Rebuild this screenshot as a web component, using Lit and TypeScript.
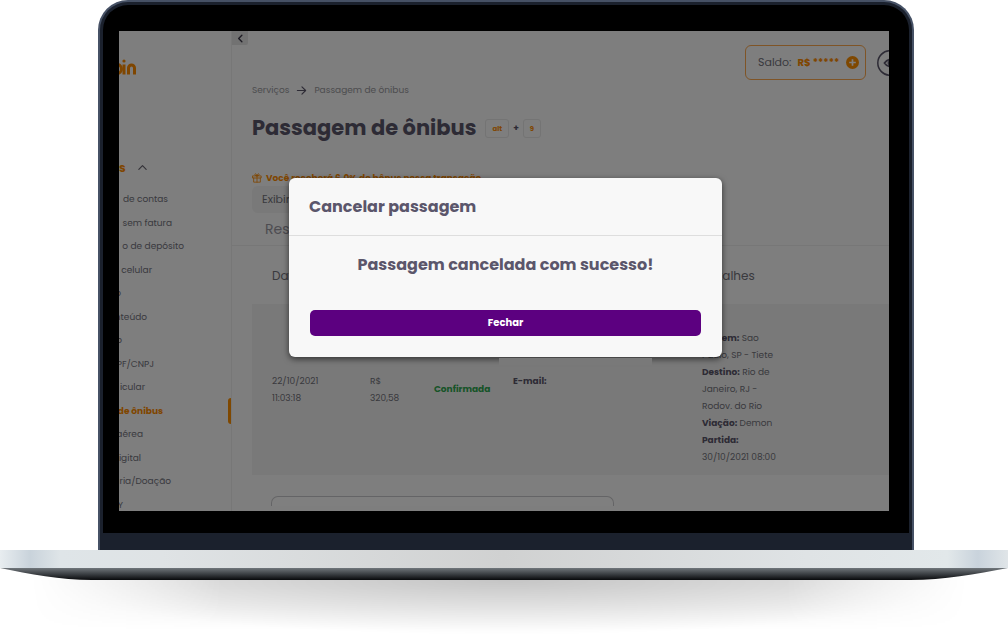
import { LitElement, html, css, svg } from "lit";
import { customElement } from "lit/decorators.js";
import { classMap } from "lit/directives/class-map.js";
import { styleMap } from "lit/directives/style-map.js";

interface NavItem {
  label: string;
  end: number;
  active?: boolean;
}

const NAV: NavItem[] = [
  { label: "de contas", end: 49 },
  { label: "sem fatura", end: 53 },
  { label: "o de depósito", end: 65 },
  { label: "celular", end: 33 },
  { label: "o", end: 2 },
  { label: "nteúdo", end: 28 },
  { label: "o", end: 3 },
  { label: "PF/CNPJ", end: 35 },
  { label: "icular", end: 26 },
  { label: "de ônibus", end: 44, active: true },
  { label: "aérea", end: 24 },
  { label: "igital", end: 22 },
  { label: "ria/Doação", end: 52 },
  { label: "Y", end: 4 },
];

@customElement("laptop-frame")
class LaptopFrame extends LitElement {
  static styles = css`
    :host {
      display: block;
    }
    .lid {
      margin: 0 94px 0 98px;
      border: 2px solid #465165;
      border-bottom: 0;
      border-radius: 30px 30px 0 0;
      background: #1b212d;
      padding: 3px 3px 17px;
    }
    .bezel {
      background: #000;
      border-radius: 25px 25px 0 0;
      padding: 26px 20px 22px 16px;
    }
    .base {
      height: 18px;
      background: linear-gradient(
        90deg,
        #e8edf0 0%,
        #c9d3db 3%,
        #dfe5e8 6%,
        #dfe3e5 16%,
        #d0d1d1 50%,
        #dfe3e5 80%,
        #e2e8ea 94%,
        #c9d3dc 97%,
        #e0e5e8 100%
      );
    }
    .under {
      display: block;
      width: 100%;
      height: 12px;
    }
    .shadow {
      height: 55px;
      background: radial-gradient(
          ellipse 46% 100% at 50% 0,
          rgba(0, 0, 0, 0.14),
          transparent
        ),
        linear-gradient(rgba(0, 0, 0, 0.1), transparent 90%);
      mask-image: linear-gradient(90deg, transparent 3%, #000 22%, #000 78%, transparent 96%);
    }
  `;

  render() {
    return html`
      <div class="lid">
        <div class="bezel"><slot></slot></div>
      </div>
      <div class="base"></div>
      <svg class="under" viewBox="0 0 1008 12" preserveAspectRatio="none" aria-hidden="true">
        <defs>
          <linearGradient id="g" x1="0" y1="0" x2="0" y2="1">
            <stop offset="0" stop-color="#70767b" />
            <stop offset="0.5" stop-color="#3c4044" />
            <stop offset="1" stop-color="#08090b" />
          </linearGradient>
        </defs>
        <path d="M0 0H1008C975 6 945 12 910 12H92C60 12 30 6 0 0Z" fill="url(#g)" />
      </svg>
      <div class="shadow"></div>
    `;
  }
}

@customElement("app-root")
class AppRoot extends LitElement {
  static styles = css`
    :host {
      display: block;
      background: #fff;
      overflow: hidden;
      font-family: Poppins, Inter, "Open Sans", sans-serif;
      font-size: 9px;
      line-height: 17px;
      color: #74747c;
    }
    * {
      box-sizing: border-box;
    }
    button,
    input {
      font: inherit;
      color: inherit;
      margin: 0;
    }
    h1,
    h2,
    p,
    ul {
      margin: 0;
      padding: 0;
    }
    a {
      color: inherit;
      text-decoration: none;
    }
    svg {
      display: block;
      flex: none;
    }
    .screen {
      position: relative;
      display: grid;
      grid-template-columns: 113px minmax(0, 1fr);
      height: 480px;
      overflow: hidden;
      background: #fcfcfc;
    }
    .side {
      border-right: 1px solid #efefef;
      min-width: 0;
    }
    .logo {
      display: block;
      width: 18px;
      height: 22px;
      margin-top: 26px;
    }
    .group {
      display: flex;
      align-items: center;
      gap: 11px;
      width: 100%;
      height: 20px;
      margin-top: 78px;
      padding: 0;
      border: 0;
      background: none;
      color: #ff8c00;
      font-size: 12px;
      font-weight: 700;
    }
    .group svg {
      color: #66636f;
    }
    .nav {
      display: flex;
      flex-direction: column;
      justify-content: space-between;
      height: 323px;
      margin-top: 14px;
      list-style: none;
    }
    .nav li {
      display: flex;
      justify-content: space-between;
      align-items: center;
      height: 17px;
    }
    .nav a {
      display: flex;
      justify-content: flex-end;
      white-space: nowrap;
    }
    .nav .active a {
      color: #ff8c00;
      font-weight: 700;
    }
    .mark {
      width: 3px;
      height: 26px;
      border-radius: 3px 0 0 3px;
      background: #ff9000;
    }
    .main {
      min-width: 0;
      overflow: hidden;
    }
    .top {
      display: flex;
      align-items: flex-start;
      justify-content: space-between;
      height: 51px;
    }
    .collapse {
      display: grid;
      place-items: center;
      width: 16px;
      height: 14px;
      padding: 0;
      border: 0;
      border-radius: 0 0 2px 0;
      background: #e4e4e4;
      color: #3c3848;
    }
    .account {
      display: flex;
      align-items: center;
      gap: 11px;
      margin: 14px -14px 0 0;
    }
    .balance {
      display: flex;
      align-items: center;
      gap: 6px;
      width: 121px;
      height: 35px;
      padding: 0 6px 0 12px;
      border: 1px solid #ffa94d;
      border-radius: 6px;
      font-size: 11px;
    }
    .balance strong {
      color: #ff8c00;
      font-size: 10px;
      flex: 1;
      white-space: nowrap;
    }
    .plus,
    .eye {
      display: block;
      padding: 0;
      border: 0;
      background: none;
    }
    .content {
      padding-left: 20px;
    }
    .crumbs {
      display: flex;
      align-items: center;
      gap: 7px;
      color: #9a9a9e;
    }
    .crumbs svg {
      color: #5b566b;
    }
    .title {
      display: flex;
      align-items: center;
      gap: 4px;
      height: 32px;
      margin-top: 13px;
      color: #5b566b;
    }
    h1 {
      font-size: 21px;
      line-height: 32px;
      font-weight: 700;
      margin-right: 5px;
      white-space: nowrap;
    }
    kbd {
      display: grid;
      place-items: center;
      height: 19px;
      padding: 0 6px;
      border: 1px solid #e8e8e8;
      border-radius: 3px;
      font: 700 7px/17px Poppins, Inter, sans-serif;
      color: #ff8c00;
    }
    .bonus {
      display: flex;
      align-items: center;
      gap: 4px;
      height: 16px;
      margin-top: 26px;
      color: #ff8c00;
      font-weight: 700;
    }
    .show {
      display: block;
      width: 90px;
      height: 27px;
      padding: 0 10px;
      border: 0;
      border-radius: 6px;
      background: #f2f2f2;
      text-align: left;
      font-size: 11px;
    }
    .results {
      height: 33px;
      padding-left: 33px;
      border-bottom: 1px solid #efefef;
      color: #9a98a2;
      font-size: 14px;
      line-height: 33px;
    }
    table {
      width: 100%;
      border-collapse: collapse;
      table-layout: fixed;
      text-align: left;
    }
    th {
      height: 58px;
      padding: 0;
      font-size: 12px;
      font-weight: 400;
    }
    td {
      height: 171px;
      padding: 0;
      vertical-align: middle;
    }
    th:first-child,
    td:first-child {
      padding-left: 20px;
    }
    .row {
      background: #f2f2f2;
    }
    .c1 {
      width: 118px;
    }
    .c2 {
      width: 64px;
    }
    .c3 {
      width: 79px;
    }
    .c4 {
      width: 189px;
    }
    .details {
      width: 82px;
      padding-top: 17px;
    }
    .email {
      padding-bottom: 17px;
    }
    b {
      font-weight: 700;
      color: #5b566b;
    }
    .ok {
      color: #2fa84f;
      font-weight: 700;
    }
    .field {
      display: block;
      width: 343px;
      height: 10px;
      margin: 21px 0 0 19px;
      border: 1px solid #c9c9cc;
      border-bottom: 0;
      border-radius: 7px 7px 0 0;
      background: #fff;
    }
    .overlay {
      position: absolute;
      inset: 0;
      display: flex;
      align-items: center;
      justify-content: center;
      padding: 0 0 7px 3px;
      background: rgba(0, 0, 0, 0.5);
    }
    .modal {
      position: relative;
      width: 433px;
      max-width: 90%;
      border-radius: 6px;
      background: #f8f8f8;
      color: #5b566b;
      box-shadow: 0 2px 6px rgba(0, 0, 0, 0.6);
    }
    .modal::after {
      content: "";
      position: absolute;
      top: calc(100% + 1px);
      left: 210px;
      width: 153px;
      height: 7px;
      background: #797979;
    }
    .head {
      height: 58px;
      padding: 0 20px;
      border-bottom: 1px solid #dedede;
    }
    .head h2,
    .body p {
      font-size: 16px;
      font-weight: 700;
      line-height: 58px;
    }
    .body {
      padding: 0 21px 21px;
      text-align: center;
    }
    .close {
      display: block;
      width: 100%;
      height: 26px;
      margin-top: 16px;
      padding: 0;
      border: 0;
      border-radius: 5px;
      background: #5c0080;
      color: #fff;
      font-size: 10px;
      line-height: 26px;
      font-weight: 700;
    }
  `;

  private icon(size: number, d: string, width = 2) {
    return html`<svg width=${size} height=${size} viewBox="0 0 24 24" fill="none" stroke="currentColor"
      stroke-width=${width} stroke-linecap="round" stroke-linejoin="round" aria-hidden="true">
      ${svg`<path d=${d} />`}
    </svg>`;
  }

  private renderSide() {
    return html`
      <nav class="side" aria-label="Menu">
        <svg class="logo" viewBox="0 0 18 22" fill="none" stroke="#ff8c00" stroke-width="3" aria-hidden="true">
          <path d="M-3 7.500A4.500 4.500 0 0 1 -3 16.500" transform="translate(1 0)" />
          <path d="M5 7.500V17.500M9.500 17.500V11a3 3 0 0 1 6 0V17.500" />
          <circle cx="5" cy="4" r="1.600" fill="#ff8c00" stroke="none" />
        </svg>
        <button class="group" type="button">s ${this.icon(11, "M4 16l8-8 8 8", 2.5)}</button>
        <ul class="nav">
          ${NAV.map(
            (item) => html`<li class=${classMap({ active: !!item.active })}>
              <a href="#" style=${styleMap({ width: `${item.end}px` })}>${item.label}</a>
              ${item.active ? html`<span class="mark"></span>` : ""}
            </li>`
          )}
        </ul>
      </nav>
    `;
  }

  private renderTable() {
    return html`
      <table>
        <colgroup>
          <col class="c1" />
          <col class="c2" />
          <col class="c3" />
          <col class="c4" />
          <col />
        </colgroup>
        <thead>
          <tr>
            <th>Data</th>
            <th></th>
            <th></th>
            <th></th>
            <th>Detalhes</th>
          </tr>
        </thead>
        <tbody>
          <tr class="row">
            <td>22/10/2021<br />11:03:18</td>
            <td>R$<br />320,58</td>
            <td class="ok">Confirmada</td>
            <td class="email"><b>E-mail:</b></td>
            <td>
              <div class="details">
                <b>Origem:</b> Sao<br />Paulo, SP - Tiete<br /><b>Destino:</b> Rio de<br />Janeiro, RJ -<br />Rodov.
                do Rio<br /><b>Viação:</b> Demon<br /><b>Partida:</b><br />30/10/2021 08:00
              </div>
            </td>
          </tr>
        </tbody>
      </table>
    `;
  }

  render() {
    return html`
      <laptop-frame>
        <div class="screen">
          ${this.renderSide()}
          <main class="main">
            <div class="top">
              <button class="collapse" type="button" aria-label="Recolher menu">
                ${this.icon(11, "M15 5l-7 7 7 7", 3)}
              </button>
              <div class="account">
                <div class="balance">
                  <span>Saldo:</span><strong>R$ *****</strong>
                  <button class="plus" type="button" aria-label="Adicionar saldo">
                    <svg width="13" height="13" viewBox="0 0 13 13" aria-hidden="true">
                      <circle cx="6.500" cy="6.500" r="6.500" fill="#ff9000" />
                      <path d="M6.500 3.200V9.800M3.200 6.500H9.800" stroke="#fff" stroke-width="1.700" />
                    </svg>
                  </button>
                </div>
                <button class="eye" type="button" aria-label="Mostrar saldo">
                  <svg width="26" height="26" viewBox="0 0 26 26" fill="none" stroke="#5b566b" aria-hidden="true">
                    <circle cx="13" cy="13" r="12.200" stroke-width="1.500" />
                    <path d="M7.500 13C10.500 8.500 15.500 8.500 18.500 13C15.500 17.500 10.500 17.500 7.500 13Z" stroke-width="1.800" />
                    <circle cx="13" cy="13" r="2" fill="#5b566b" />
                  </svg>
                </button>
              </div>
            </div>
            <div class="content">
              <div class="crumbs">
                <a href="#">Serviços</a>${this.icon(11, "M3 12h18M13 4l8 8-8 8", 2.5)}<a href="#">Passagem de ônibus</a>
              </div>
              <div class="title">
                <h1>Passagem de ônibus</h1>
                <kbd>alt</kbd><b>+</b><kbd>9</kbd>
              </div>
              <p class="bonus">
                ${this.icon(10, "M2 7h20v5H2zM4 12v10h16V12M12 7v15M12 7C8 7 6 5 7 3s4-1 5 4c1-5 4-6 5-4s-1 4-5 4", 2)}
                Você receberá 6,0% de bônus nessa transação
              </p>
              <button class="show" type="button">Exibir</button>
            </div>
            <div class="results">Res</div>
            <div class="content">
              ${this.renderTable()}
              <input class="field" type="text" aria-label="Buscar" />
            </div>
          </main>
          <div class="overlay">
            <section class="modal" role="dialog" aria-modal="true" aria-labelledby="modal-title">
              <div class="head"><h2 id="modal-title">Cancelar passagem</h2></div>
              <div class="body">
                <p>Passagem cancelada com sucesso!</p>
                <button class="close" type="button">Fechar</button>
              </div>
            </section>
          </div>
        </div>
      </laptop-frame>
    `;
  }
}
